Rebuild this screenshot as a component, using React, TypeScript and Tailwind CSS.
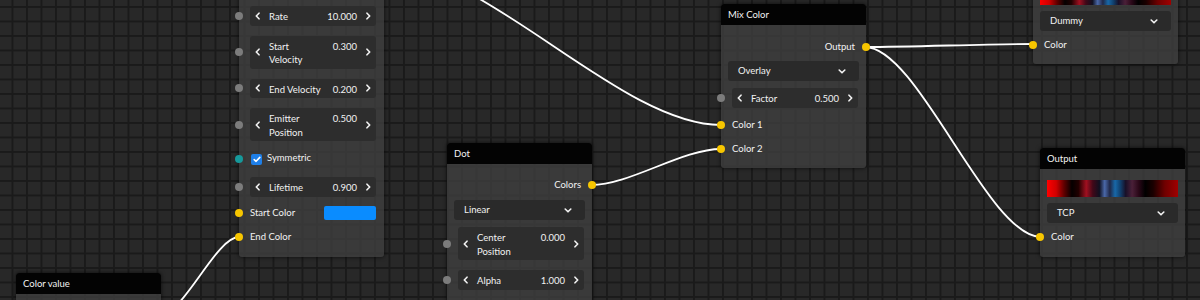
import React from "react";

function Socket({ color, side = "left" }: { color: string; side?: "left" | "right" }) {
  return (
    <span
      className={`absolute top-1/2 -translate-y-1/2 w-[8px] h-[8px] rounded-full z-10 ${color} ${
        side === "left" ? "left-[-4px]" : "right-[-4px]"
      }`}
    />
  );
}

function ChevL() {
  return (
    <svg width="5" height="8" viewBox="0 0 5 8" className="block">
      <path d="M4 1.2L1.3 4L4 6.8" stroke="#f2f2f2" strokeWidth="1.6" fill="none" strokeLinecap="round" strokeLinejoin="round" />
    </svg>
  );
}
function ChevR() {
  return (
    <svg width="5" height="8" viewBox="0 0 5 8" className="block">
      <path d="M1 1.2L3.7 4L1 6.8" stroke="#f2f2f2" strokeWidth="1.6" fill="none" strokeLinecap="round" strokeLinejoin="round" />
    </svg>
  );
}
function ChevD() {
  return (
    <svg width="8" height="5" viewBox="0 0 8 5" className="block">
      <path d="M1.2 1L4 3.8L6.8 1" stroke="#f2f2f2" strokeWidth="1.6" fill="none" strokeLinecap="round" strokeLinejoin="round" />
    </svg>
  );
}

function NumRow({ label, value }: { label: string; value: string }) {
  const lines = label.split("\n");
  return (
    <div className="relative py-[5px] pl-[11px] pr-[8px]">
      <Socket color="bg-[#7c7c7c]" />
      <div className="flex items-center rounded-[3px] bg-[#2d2d2d] pt-[4px] pb-[2px]">
        <div className="w-[19px] pl-[5px] flex -mt-[2px]">
          <ChevL />
        </div>
        <div className="flex-1 leading-[13.5px]">
          {lines.map((l) => (
            <div key={l}>{l}</div>
          ))}
        </div>
        <div className="self-start leading-[13.5px]">{value}</div>
        <div className="w-[19px] pr-[5px] flex justify-end -mt-[2px]">
          <ChevR />
        </div>
      </div>
    </div>
  );
}

function Select({ value, className = "" }: { value: string; className?: string }) {
  return (
    <div className={`mx-[7px] h-[20px] rounded-[3px] bg-[#2a2a2a] flex items-center pl-[10px] pr-[13px] ${className}`}>
      <span className="flex-1 pt-[1px]">{value}</span>
      <ChevD />
    </div>
  );
}

function LabelRow({ label, color, h = "h-[24px]" }: { label: string; color: string; h?: string }) {
  return (
    <div className={`relative ${h} flex items-center pl-[11px]`}>
      <Socket color={color} />
      <span className="pt-[1px]">{label}</span>
    </div>
  );
}

function OutRow({ label, h = "h-[24px]" }: { label: string; h?: string }) {
  return (
    <div className={`relative ${h} flex items-center justify-end pr-[11px]`}>
      <span className="pt-[1px]">{label}</span>
      <Socket color="bg-[#f7c600]" side="right" />
    </div>
  );
}

function Header({ title }: { title: string }) {
  return (
    <div className="h-[21px] bg-[#030303] rounded-t-[3px] flex items-center pl-[7px]">
      <span className="pt-[1px]">{title}</span>
    </div>
  );
}

const gradient =
  "bg-[linear-gradient(90deg,#ff0000_0%,#d00000_7%,#600000_13%,#050000_19%,#200000_24%,#a01020_30%,#400818_35%,#101020_40%,#4a68a8_44%,#202848_48%,#1868a8_52%,#10406e_56%,#181028_60%,#4a2038_65%,#2a0818_70%,#000000_75%,#1a0000_81%,#700000_90%,#a00000_100%)]";

const nodeCls =
  "absolute w-[145px] rounded-[3px] bg-[#3f3f3fcc] shadow-[0_0_4px_rgba(0,0,0,0.7)]";

export default function App() {
  return (
    <div
      className="relative w-[1200px] h-[300px] overflow-hidden bg-[#282828] [background-image:linear-gradient(#1a1a1a_1.5px,transparent_1.5px),linear-gradient(90deg,#1a1a1a_1.5px,transparent_1.5px)] [background-size:14.5px_14.5px] [background-position:11.5px_6px] text-[#f2f2f2] text-[9.5px] font-['Lato',sans-serif]"
    >
      <svg className="absolute inset-0" width="1200" height="300">
        <g stroke="#ffffff" strokeWidth="1.8" fill="none">
          <path d="M384 -34 C485 -34, 620 125, 721 125" />
          <path d="M591 185 C630 185, 682 149, 721 149" />
          <path d="M865 47 C915 47, 983 44, 1034 44" />
          <path d="M865 47 C918 47, 988 237, 1041 237" />
          <path d="M161 314 C184 314, 216 237, 239 237" />
        </g>
      </svg>

      {/* Particle node */}
      <div className={`${nodeCls} left-[239px] top-[-10px] pt-[11px] pb-[8px]`}>
        <NumRow label="Rate" value="10.000" />
        <NumRow label={"Start\nVelocity"} value="0.300" />
        <NumRow label="End Velocity" value="0.200" />
        <NumRow label={"Emitter\nPosition"} value="0.500" />
        <div className="relative h-[26px] flex items-center pl-[12px]">
          <Socket color="bg-[#16999b]" />
          <span className="w-[11px] h-[11px] rounded-[2px] bg-[#1e7fe8] flex items-center justify-center mr-[5px]">
            <svg width="8" height="7" viewBox="0 0 8 7">
              <path d="M1.2 3.6L3.1 5.3L6.8 1.4" stroke="#fff" strokeWidth="1.6" fill="none" strokeLinecap="round" strokeLinejoin="round" />
            </svg>
          </span>
          <span className="-mt-[1px]">Symmetric</span>
        </div>
        <NumRow label="Lifetime" value="0.900" />
        <div className="relative h-[23px] flex items-center pl-[11px] pr-[8px]">
          <Socket color="bg-[#f7c600]" />
          <span className="flex-1 pt-[1px]">Start Color</span>
          <span className="w-[52px] h-[14px] rounded-[2px] bg-[#0a8cff]" />
        </div>
        <LabelRow label="End Color" color="bg-[#f7c600]" />
      </div>

      {/* Color value node */}
      <div className={`${nodeCls} left-[16px] top-[273px] h-[60px]`}>
        <Header title="Color value" />
      </div>

      {/* Dot node */}
      <div className={`${nodeCls} left-[447px] top-[143px] pb-[8px]`}>
        <Header title="Dot" />
        <div className="pt-[9px]">
          <OutRow label="Colors" />
          <Select value="Linear" className="mt-[3px] mb-[2px]" />
          <NumRow label={"Center\nPosition"} value="0.000" />
          <NumRow label="Alpha" value="1.000" />
        </div>
      </div>

      {/* Mix Color node */}
      <div className={`${nodeCls} left-[721px] top-[4px] pb-[7px]`}>
        <Header title="Mix Color" />
        <div className="pt-[10px]">
          <OutRow label="Output" />
          <Select value="Overlay" className="mt-[2px] mb-[2px]" />
          <NumRow label="Factor" value="0.500" />
          <LabelRow label="Color 1" color="bg-[#f7c600]" />
          <LabelRow label="Color 2" color="bg-[#f7c600]" />
        </div>
      </div>

      {/* Top-right output node */}
      <div className={`${nodeCls} left-[1033px] top-[-44px] pb-[7px]`}>
        <div className="h-[21px] bg-[#030303] rounded-t-[3px]" />
        <div className="pt-[11px]">
          <div className={`mx-[7px] h-[17px] ${gradient}`} />
          <Select value="Dummy" className="mt-[6px]" />
          <LabelRow label="Color" color="bg-[#f7c600]" h="h-[24px] mt-[2px]" />
        </div>
      </div>

      {/* Output node */}
      <div className={`${nodeCls} left-[1040px] top-[148px] pb-[8px]`}>
        <Header title="Output" />
        <div className="pt-[11px]">
          <div className={`mx-[7px] h-[17px] ${gradient}`} />
          <Select value="TCP" className="mt-[6px]" />
          <LabelRow label="Color" color="bg-[#f7c600]" h="h-[24px] mt-[2px]" />
        </div>
      </div>
    </div>
  );
}
